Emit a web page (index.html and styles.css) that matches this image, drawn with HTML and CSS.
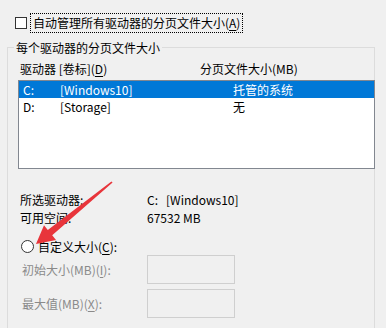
FILE: index.html
```html
<!DOCTYPE html>
<html lang="zh-CN">
<head>
  <meta charset="UTF-8" />
  <title>虚拟内存</title>
  <link rel="stylesheet" href="styles.css">
</head>
<body>

<div class="auto">
  <span class="check"></span>
  <span class="focus">自动管理所有驱动器的分页文件大小(<u>A</u>)</span>
</div>

<fieldset class="group">
  <legend>每个驱动器的分页文件大小</legend>
  <div class="head">
    <span class="col-drive">驱动器 [卷标](<u>D</u>)</span>
    <span class="col-size">分页文件大小(MB)</span>
  </div>
  <div class="list">
    <div class="row selected">
      <span class="letter">C:</span><span class="label">[Windows10]</span><span class="size">托管的系统</span>
    </div>
    <div class="row">
      <span class="letter">D:</span><span class="label">[Storage]</span><span class="size">无</span>
    </div>
  </div>

  <div class="info first">
    <span class="key">所选驱动器:</span>
    <span class="val">C:&nbsp;&nbsp;&nbsp;[Windows10]</span>
  </div>
  <div class="info">
    <span class="key">可用空间:</span>
    <span class="val">67532 MB</span>
  </div>

  <div class="radio-row">
    <span class="radio"></span>
    <span>自定义大小(<u>C</u>):</span>
  </div>
  <div class="field">
    <span class="key">初始大小(MB)(<u>I</u>):</span>
    <span class="box"></span>
  </div>
  <div class="field">
    <span class="key">最大值(MB)(<u>X</u>):</span>
    <span class="box"></span>
  </div>
</fieldset>

<svg class="arrow" width="386" height="328" viewBox="0 0 386 328">
  <polygon points="112.6,182.6 52.2,235.2 56,240 36,244 44,225.2 47.8,230 111.4,181.4" fill="#e8353b"/>
</svg>

</body>
</html>
```

FILE: styles.css
```css
body {
  margin: 0;
  width: 386px;
  height: 328px;
  overflow: hidden;
  background: #f0f0f0;
  color: #000;
  font-family: "Noto Sans CJK SC", "Noto Sans", sans-serif;
  font-size: 12px;
  position: relative;
}
u { text-decoration-thickness: 1px; text-underline-offset: 2px; }

.auto {
  display: flex;
  align-items: center;
  height: 20px;
  margin-top: 13px;
  padding-left: 15px;
}
.check {
  width: 10px;
  height: 10px;
  border: 1px solid #333;
  background: #fff;
  margin-right: 3px;
}
.focus {
  border: 1px dotted #000;
  padding: 0 2px;
  line-height: 18px;
}

.group {
  margin: 6px 0 0 7px;
  width: 368px;
  box-sizing: border-box;
  padding: 0 0 20px 10px;
  border: 1px solid #dcdcdc;
  min-inline-size: 0;
}
.group legend {
  margin-left: -4px;
  padding: 0 2px;
  line-height: 17px;
}

.head {
  display: flex;
  height: 18px;
  line-height: 18px;
  margin-top: 4px;
  padding-left: 2px;
}
.col-drive { width: 180px; }

.list {
  margin-top: 2px;
  margin-right: -1px;
  height: 87px;
  border: 1px solid #828790;
  background: #fff;
}
.row {
  display: flex;
  height: 17px;
  line-height: 17px;
  padding-left: 4px;
}
.row.selected { background: #0078d7; color: #fff; }
.letter { width: 37px; }
.label { width: 173px; }

.info {
  display: flex;
  height: 18px;
  line-height: 18px;
  padding-left: 2px;
}
.info.first { margin-top: 22px; }
.key { width: 127px; }

.radio-row {
  display: flex;
  align-items: center;
  height: 17px;
  margin-top: 11px;
  padding-left: 3px;
}
.radio {
  width: 11px;
  height: 11px;
  border: 1px solid #333;
  border-radius: 50%;
  background: #fff;
  margin-right: 4px;
}

.field {
  display: flex;
  align-items: center;
  height: 29px;
  margin-bottom: 5px;
  padding-left: 4px;
  color: #8a8a8a;
}
.field .key { width: 125px; }
.box {
  width: 86px;
  height: 27px;
  border: 1px solid #cfcfcf;
  background: #f0f0f0;
}

.arrow {
  position: absolute;
  left: 0;
  top: 0;
}
```
